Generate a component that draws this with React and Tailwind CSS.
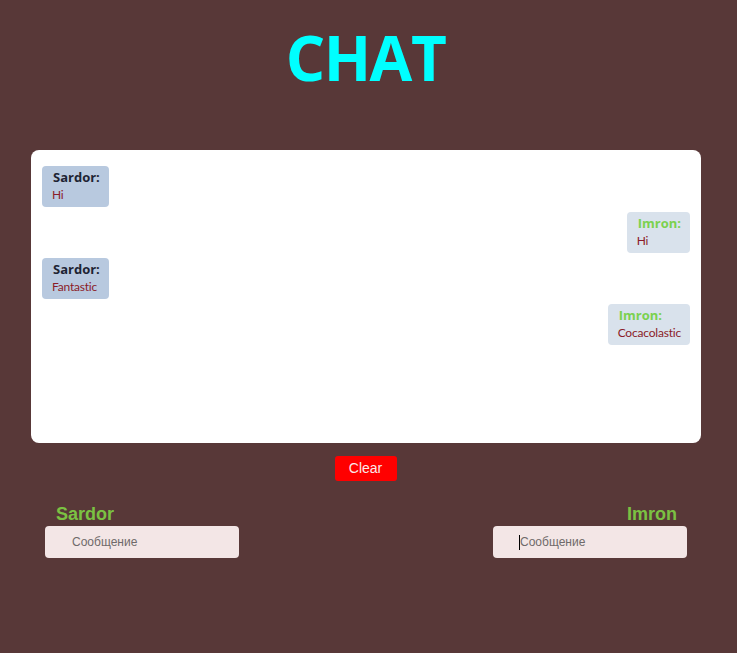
export default function App() {
  const msgs = [
    { from: "Sardor", text: "Hi" },
    { from: "Imron", text: "Hi" },
    { from: "Sardor", text: "Fantastic" },
    { from: "Imron", text: "Cocacolastic" },
  ];
  return (
    <div className="min-h-[653px] w-[737px] bg-[#583838] overflow-hidden">
      <h1 className="text-center text-[#00ffff] font-bold text-[62px] leading-[80px] pt-[17px] pr-[6px] tracking-[-1.5px]" style={{ fontFamily: '"Open Sans", sans-serif' }}>
        CHAT
      </h1>
      <div className="ml-[31px] mt-[53px] w-[670px] h-[293px] bg-white rounded-[8px] pt-[16px] px-[11px] flex flex-col gap-[5px]">
        {msgs.map((m, i) => {
          const s = m.from === "Sardor";
          return (
            <div key={i} className={"flex " + (s ? "justify-start" : "justify-end")}>
              <div className={"rounded-[4px] pl-[10px] pr-[9px] pt-[2px] pb-[3px] " + (s ? "bg-[#b8c9df]" : "bg-[#d9e2ec]")}>
                <div className={"font-bold text-[13px] leading-[18px] pl-[1px] " + (s ? "text-[#1e2433]" : "text-[#7bd14f]")} style={{ fontFamily: '"Open Sans", sans-serif' }}>
                  {m.from}:
                </div>
                <div className="text-[12px] leading-[18px] text-[#8b1c28] tracking-[-0.2px]" style={{ fontFamily: 'Lato, sans-serif' }}>
                  {m.text}
                </div>
              </div>
            </div>
          );
        })}
      </div>
      <div className="flex justify-center mt-[13px] pr-[6px]">
        <button className="w-[62px] h-[25px] bg-[#ff0000] rounded-[3px] text-[#fbeaea] text-[14px]" style={{ fontFamily: '"Liberation Sans", Arial, sans-serif' }}>
          Clear
        </button>
      </div>
      <div className="flex justify-between pl-[45px] pr-[50px] mt-[21px]" style={{ fontFamily: '"Liberation Sans", Arial, sans-serif' }}>
        <div className="w-[194px] flex flex-col">
          <div className="text-[#7bc142] font-bold text-[18px] leading-[24px] pl-[11px]">Sardor</div>
          <div className="h-[32px] bg-[#f3e6e6] rounded-[4px] flex items-center pl-[27px] text-[12px] text-[#6f6a6a]">Сообщение</div>
        </div>
        <div className="w-[194px] flex flex-col">
          <div className="text-[#7bc142] font-bold text-[18px] leading-[24px] text-right pr-[10px]">Imron</div>
          <div className="h-[32px] bg-[#f3e6e6] rounded-[4px] flex items-center pl-[26px] text-[12px] text-[#6f6a6a]">
            <span className="w-[1px] h-[15px] bg-black"></span>Сообщение
          </div>
        </div>
      </div>
    </div>
  );
}
